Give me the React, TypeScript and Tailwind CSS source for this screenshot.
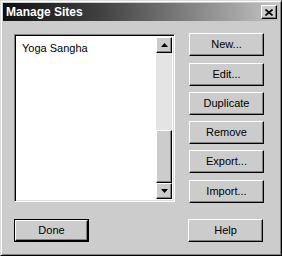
import React from "react";

const raised =
  "bg-[#cccccc] border border-t-white border-l-white border-r-black border-b-black shadow-[inset_-1px_-1px_#808080]";

function Btn({ label, cls = "" }: { label: string; cls?: string }) {
  return (
    <div
      className={`w-[75px] h-[23px] flex items-center justify-center text-[11px] text-black ${raised} ${cls}`}
    >
      {label}
    </div>
  );
}

function Arrow({ up }: { up?: boolean }) {
  return (
    <div className={`w-[16px] h-[16px] flex items-center justify-center ${raised}`}>
      <svg width="7" height="4" viewBox="0 0 7 4">
        {up ? (
          <polygon points="3.5,0 7,4 0,4" fill="#000" />
        ) : (
          <polygon points="0,0 7,0 3.5,4" fill="#000" />
        )}
      </svg>
    </div>
  );
}

export default function App() {
  return (
    <div
      className="w-[282px] h-[256px] bg-[#cccccc] border border-t-[#dcdcdc] border-l-[#dcdcdc] border-r-black border-b-black shadow-[inset_1px_1px_#fff,inset_-1px_-1px_#808080] p-[2px] flex flex-col"
      style={{ fontFamily: '"Liberation Sans", Arial, sans-serif' }}
    >
      <div className="h-[18px] flex items-center justify-between bg-[linear-gradient(to_right,#101010,#404040_35%,#c4c4c4)] pl-[3px] pr-[2px]">
        <span className="text-white font-bold text-[12px] leading-none">Manage Sites</span>
        <div className={`w-[16px] h-[14px] flex items-center justify-center ${raised}`}>
          <svg width="8" height="7" viewBox="0 0 8 7">
            <path d="M0.5 0.5 L7.5 6.5 M7.5 0.5 L0.5 6.5" stroke="#000" strokeWidth="1.6" />
          </svg>
        </div>
      </div>
      <div className="flex pl-[11px] pt-[12px]">
        <div className="w-[161px] h-[168px] mt-[1px] bg-white border border-t-[#808080] border-l-[#808080] border-r-white border-b-white shadow-[inset_1px_1px_#000,inset_-1px_-1px_#dcdcdc] p-[2px] flex">
          <div className="flex-1 pl-[5px] pt-[5px] text-[11px] text-black leading-[13px]">Yoga Sangha</div>
          <div className="w-[16px] flex flex-col bg-[#e4e4e4]">
            <Arrow up />
            <div className="flex-1 flex flex-col justify-end">
              <div className={`h-[53px] w-[16px] ${raised}`} />
            </div>
            <Arrow />
          </div>
        </div>
        <div className="ml-[14px] flex flex-col">
          <Btn label="New..." />
          <Btn label="Edit..." cls="mt-[7px]" />
          <Btn label="Duplicate" cls="mt-[6px]" />
          <Btn label="Remove" cls="mt-[6px]" />
          <Btn label="Export..." cls="mt-[6px]" />
          <Btn label="Import..." cls="mt-[7px]" />
        </div>
      </div>
      <div className="flex justify-between pl-[11px] pr-[16px] mt-[16px]">
        <div className="w-[75px] h-[23px] border border-black">
          <div className={`w-full h-full flex items-center justify-center text-[11px] text-black ${raised}`}>Done</div>
        </div>
        <Btn label="Help" />
      </div>
    </div>
  );
}
